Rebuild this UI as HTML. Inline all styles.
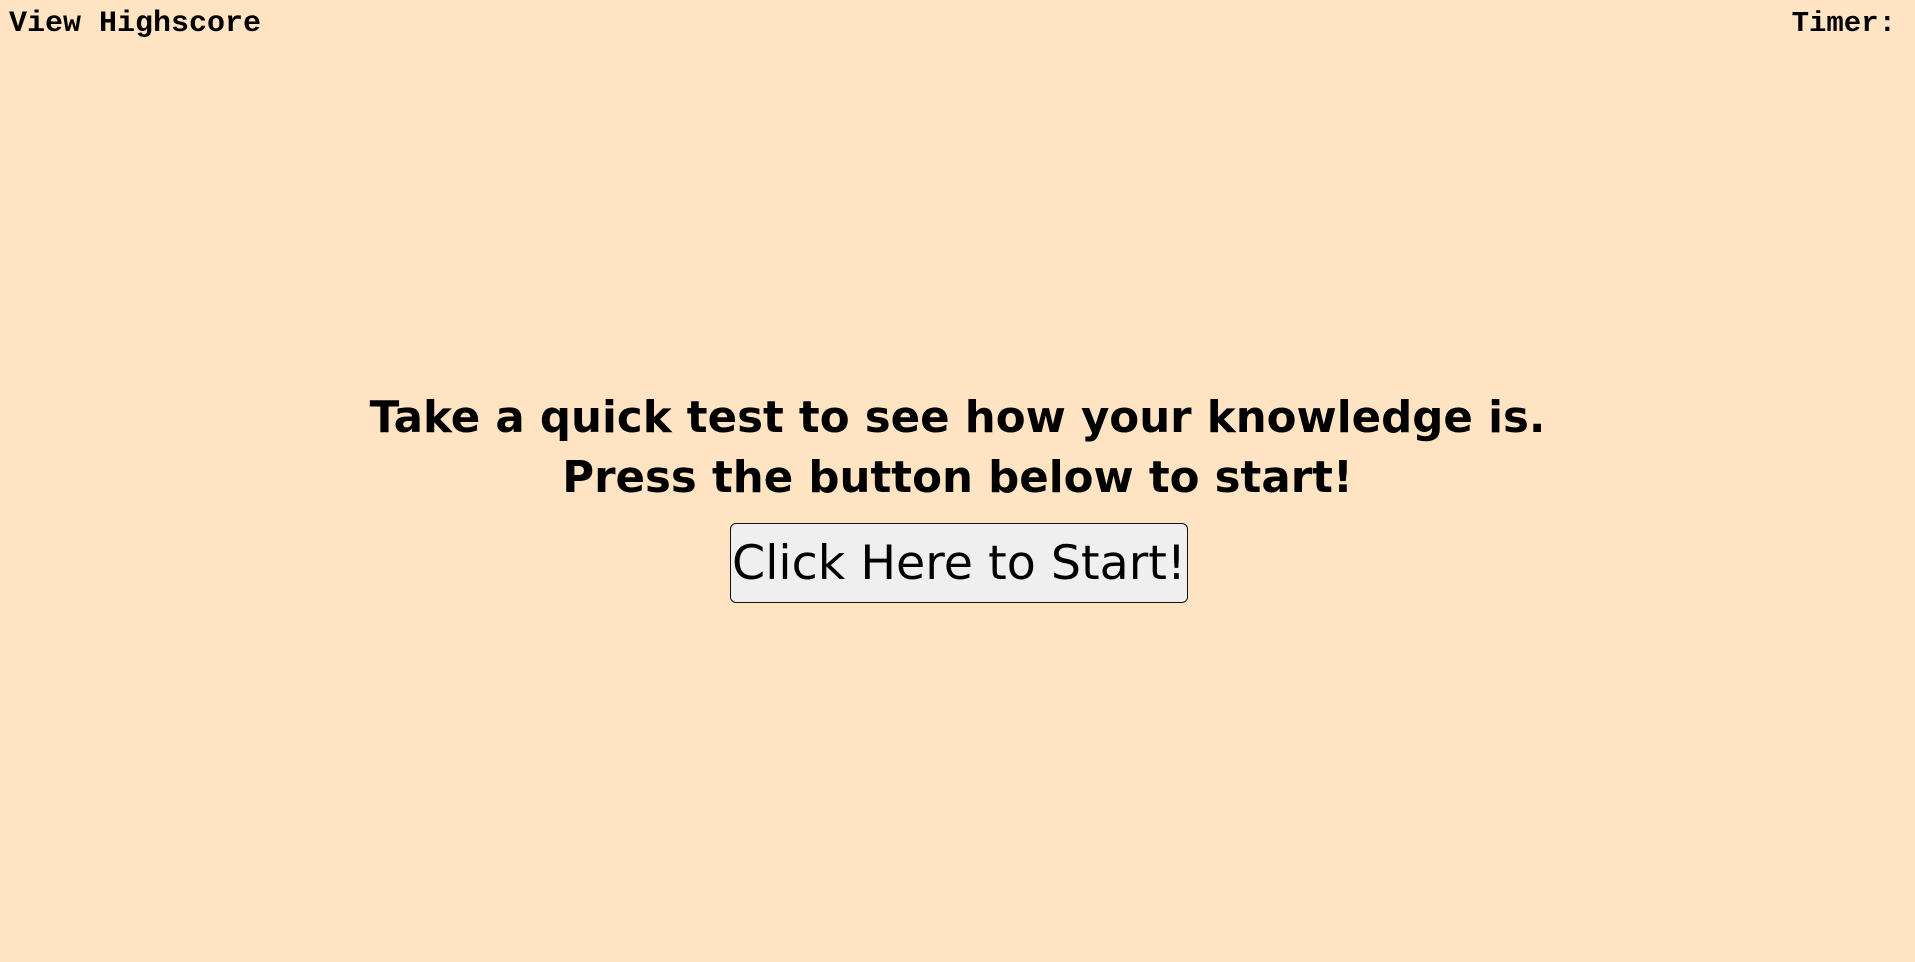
<!DOCTYPE html>
<html><head><style>
html,body{margin:0;padding:0;width:1915px;height:962px;background:#ffe4c4;overflow:hidden}
.nav{position:absolute;top:7px;font-family:"Liberation Mono",monospace;font-weight:bold;font-size:30px;color:#000}
h1{position:absolute;left:0;width:1915px;top:388px;margin:0;text-align:center;font-family:"DejaVu Sans",sans-serif;font-weight:bold;font-size:43.5px;line-height:60px;color:#000}
button{position:absolute;left:730px;top:523px;width:458px;height:80px;padding:0;border:1px solid #111;border-radius:6px;background:#efefef;font-family:"DejaVu Sans",sans-serif;font-size:47.5px;color:#000;white-space:nowrap;text-align:center}
</style></head><body>
<div class="nav" style="left:9px">View Highscore</div>
<div class="nav" style="right:19px;font-size:29px">Timer:</div>
<h1>Take a quick test to see how your knowledge is.<br>Press the button below to start!</h1>
<button>Click Here to Start!</button>
</body></html>
